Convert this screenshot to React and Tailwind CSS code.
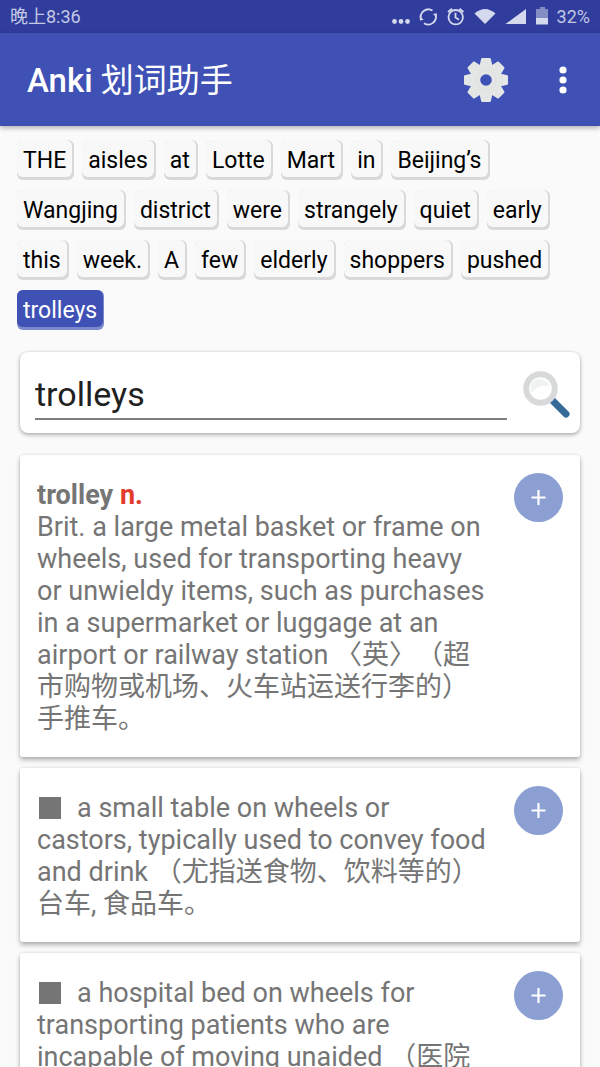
import { useState } from "react";

const WORDS = [
  "THE", "aisles", "at", "Lotte", "Mart", "in", "Beijing’s",
  "Wangjing", "district", "were", "strangely", "quiet", "early",
  "this", "week.", "A", "few", "elderly", "shoppers", "pushed", "trolleys",
];

function StatusIcons() {
  return (
    <svg width="160" height="33" viewBox="390 0 160 33" fill="#d5d9ee" aria-hidden="true">
      <circle cx="393.5" cy="21.5" r="2.4" />
      <circle cx="400" cy="21.5" r="2.4" />
      <circle cx="406.5" cy="21.5" r="2.4" />
      <g fill="none" stroke="#d5d9ee" strokeWidth="1.8">
        <path d="M420.200 19.500A7.600 7.600 0 0 1 431.500 10.600M434.400 14.300A7.600 7.600 0 0 1 423 23.200" />
        <circle cx="454.7" cy="17.200" r="7.200" />
        <path d="M454.500 12.800V17.500L458 19.800M447 12L451 8.700M462.500 12L458.500 8.700" />
      </g>
      <path d="M418.600 16.500L422.800 19.800L419 20.500ZM436 17.300L431.800 14L435.600 13.300Z" />
      <path d="M473.500 13.500Q484 4.500 494.500 13.500L484 24Z" />
      <path d="M525 9V24H504.5Z" />
      <path d="M539 7h5v2h3v9h-12V9h4Z" fill="#858dc5" />
      <path d="M535 18h12v6.5h-12Z" />
    </svg>
  );
}

function GearIcon() {
  return (
    <svg width="46" height="46" viewBox="-23 -23 46 46" aria-hidden="true">
      <g fill="#e4e6e6" stroke="#e4e6e6" strokeWidth="2" strokeLinejoin="round">
        {[0, 45, 90, 135, 180, 225, 270, 315].map((angle) => (
          <path key={angle} d="M-5.600 -13L-4.800 -17L-3.800 -21H3.800L4.800 -17L5.600 -13Z" transform={`rotate(${angle})`} />
        ))}
      </g>
      <circle r="10.700" fill="none" stroke="#e4e6e6" strokeWidth="9.800" />
      <circle r="10" fill="none" stroke="#dfe1e1" strokeWidth="1" />
    </svg>
  );
}

function SearchIcon() {
  return (
    <svg width="48" height="48" viewBox="0 0 48 48" aria-hidden="true">
      <path d="M28 28L43 43" stroke="#366b99" strokeWidth="7" strokeLinecap="round" />
      <circle cx="17.5" cy="17.5" r="14.3" fill="#fff" stroke="#d7d9da" strokeWidth="6" />
      <path d="M8.500 22C6 13 11 8 17 8C21 8 25.500 11 26.500 14.500C19 14 13 16 8.500 22Z" fill="#f0f1f1" />
    </svg>
  );
}

function Word({ text, selected, onSelect }) {
  return (
    <button
      type="button"
      onClick={onSelect}
      aria-pressed={selected}
      className={
        selected
          ? "rounded-md bg-[#7c88cc] pr-px pb-[3px] text-white"
          : "rounded-md bg-[#d9d9d9] pr-0.5 pb-[3px] text-black"
      }
    >
      <span className={`block rounded-md px-1.5 pt-[5px] leading-8 ${selected ? "bg-[#3f51b5]" : "bg-[#f8f8f8]"}`}>
        {text}
      </span>
    </button>
  );
}

function Definition({ children }) {
  return (
    <li className="flex items-start gap-7 rounded-[3px] bg-white px-[17px] pt-6 pb-[22px] shadow-[0_3px_5px_rgba(0,0,0,0.28),0_0_3px_rgba(0,0,0,0.12)]">
      <p className="min-w-0 flex-1 text-[27px] leading-8 text-[#757575] [text-spacing-trim:space-all]">{children}</p>
      <button
        type="button"
        aria-label="+"
        className="-mt-1.5 flex size-[49px] shrink-0 items-center justify-center rounded-full bg-[#8c9fd3]"
      >
        <svg width="15" height="15" viewBox="0 0 15 15" stroke="#fff" strokeWidth="2.2" aria-hidden="true">
          <path d="M7.500 0V15M0.500 7.500H14.500" />
        </svg>
      </button>
    </li>
  );
}

function Bullet() {
  return (
    <svg width="22" height="22" viewBox="0 0 22 22" className="mr-4 ml-0.5 inline-block align-[-2px]" aria-hidden="true">
      <path d="M0 0H22V22H0Z" fill="#757575" />
    </svg>
  );
}

export default function App() {
  const [selected, setSelected] = useState(WORDS.length - 1);
  const [query, setQuery] = useState("trolleys");

  const choose = (index) => {
    setSelected(index);
    setQuery(WORDS[index]);
  };

  return (
    <div lang="zh-CN" className="flex h-screen flex-col overflow-hidden bg-[#fafafa] font-['Roboto','Noto_Sans_CJK_SC',sans-serif]">
      <div className="flex h-[33px] shrink-0 items-center justify-between bg-[#303d9c] px-2.5 text-lg text-[#c3c8e5]">
        <span>晚上8:36</span>
        <span className="flex items-center gap-1.5">
          <StatusIcons />
          32%
        </span>
      </div>
      <header className="z-10 flex h-[93px] shrink-0 items-center bg-[#3f51b5] pr-[25px] pl-[27px] text-white shadow-[0_2px_5px_rgba(0,0,0,0.3)]">
        <h1 className="flex-1 pt-0.5 text-[33px] font-medium">
          Anki <span className="font-normal">划词助手</span>
        </h1>
        <button type="button" aria-label="设置" className="mr-[42px]">
          <GearIcon />
        </button>
        <button type="button" aria-label="更多" className="px-2">
          <svg width="8" height="28" viewBox="0 0 8 28" fill="#fff" aria-hidden="true">
            <circle cx="4" cy="4" r="3.6" />
            <circle cx="4" cy="14" r="3.6" />
            <circle cx="4" cy="24" r="3.6" />
          </svg>
        </button>
      </header>

      <main className="min-h-0 flex-1 overflow-hidden">
        <div className="flex flex-wrap gap-x-2 gap-y-2.5 px-[17px] pt-3.5 text-[23px]">
          {WORDS.map((word, index) => (
            <Word key={word} text={word} selected={index === selected} onSelect={() => choose(index)} />
          ))}
        </div>

        <form
          onSubmit={(event) => event.preventDefault()}
          className="mx-5 mt-[22px] flex items-center rounded-lg bg-white py-[13px] pr-[9px] pl-[15px] shadow-[0_2px_4px_rgba(0,0,0,0.28),0_0_3px_rgba(0,0,0,0.12)]"
        >
          <input
            type="text"
            aria-label="查词"
            value={query}
            onChange={(event) => setQuery(event.target.value)}
            className="h-[55px] min-w-0 flex-1 border-b-2 border-[#7f7f7f] pt-1 text-[34px] text-[#212121] outline-none"
          />
          <button type="submit" aria-label="搜索" className="ml-4 pt-1">
            <SearchIcon />
          </button>
        </form>

        <ul className="mx-5 mt-[22px] flex flex-col gap-[11px]">
          <Definition>
            <b>
              trolley <span className="text-[#e33b2b]">n.</span>
            </b>
            <br />
            Brit. a large metal basket or frame on wheels, used for transporting heavy or unwieldy items, such as
            purchases in a supermarket or luggage at an airport or railway station
            〈英〉（超市购物或机场、火车站运送行李的）手推车。
          </Definition>
          <Definition>
            <Bullet />a small table on wheels or castors, typically used to convey food and drink
            （尤指送食物、饮料等的）台车, 食品车。
          </Definition>
          <Definition>
            <Bullet />a hospital bed on wheels for transporting patients who are incapable of moving unaided （医院
          </Definition>
        </ul>
      </main>
    </div>
  );
}
